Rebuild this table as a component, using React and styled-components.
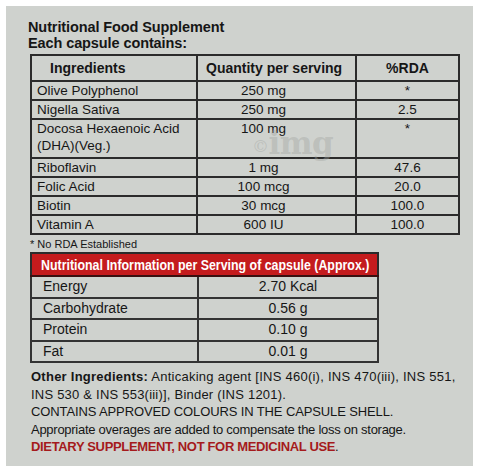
import styled, { createGlobalStyle } from "styled-components";

const GlobalStyle = createGlobalStyle`
  body {
    margin: 0;
    background: #ffffff;
    font-family: "Liberation Sans", Arial, sans-serif;
  }
`;

const Panel = styled.div`
  position: relative;
  margin: 6px 0 0 6px;
  width: 467px;
  height: 460px;
  box-sizing: border-box;
  padding: 13px 0 0 24px;
  background: #cfd2ce;
  color: #161616;
`;

const Title = styled.h1`
  margin: 0 0 3px -2px;
  font-size: 14.5px;
  line-height: 16px;
  font-weight: 700;
  letter-spacing: -0.1px;
`;

const Table = styled.table`
  border-collapse: collapse;
  table-layout: fixed;
  width: ${p => p.width}px;
  border: 2px solid #2b2b2b;
`;

const Head = styled.th`
  height: 24px;
  padding: 0 0 0 ${p => p.pad || 0}px;
  border: 2px solid #2b2b2b;
  font-size: 14px;
  font-weight: 700;
  text-align: ${p => p.align || "left"};
`;

const Cell = styled.td`
  height: ${p => p.tall ? 37 : 17}px;
  padding: 0 ${p => p.right || 0}px 0 ${p => p.left || 0}px;
  border: 2px solid #2b2b2b;
  font-size: 13.5px;
  line-height: 17px;
  text-align: ${p => p.align || "left"};
  vertical-align: top;
`;

const Footnote = styled.div`
  margin: 3px 0 1px;
  font-size: 11px;
  line-height: 13px;
`;

const RedHead = styled.th`
  height: 21px;
  padding: 0 0 0 9px;
  background: #c41b1d;
  border-bottom: 2px solid #3a1010;
  color: #fff;
  font-size: 14px;
  font-weight: 700;
  text-align: left;
  white-space: nowrap;
  overflow: hidden;
`;

const Narrow = styled.span`
  display: inline-block;
  transform: scaleX(${p => p.scale});
  transform-origin: left center;
`;

const InfoCell = styled.td`
  height: 19.5px;
  padding: 0 0 0 ${p => p.left || 0}px;
  border: 2px solid #333;
  font-size: 14px;
  line-height: 19.5px;
  text-align: ${p => p.align || "left"};
`;

const Notes = styled.div`
  margin: 5px 0 0 1px;
  font-size: 13px;
  line-height: 17.5px;
  white-space: nowrap;
`;

const Line = styled.div`
  letter-spacing: ${p => p.spacing}px;
`;

const Strong = styled.b`
  color: ${p => p.red ? "#a51a1c" : "inherit"};
`;

const Watermark = styled.div`
  position: absolute;
  left: 246px;
  top: 122px;
  color: rgba(160, 162, 158, 0.4);
  font-family: "DejaVu Serif", serif;
  font-weight: 700;
  font-size: 31px;
  line-height: 31px;
  letter-spacing: -0.5px;
  pointer-events: none;
  span {
    font-size: 17px;
    font-weight: 400;
    vertical-align: 2px;
  }
`;

const ingredients = [
  ["Olive Polyphenol", "250 mg", "*"],
  ["Nigella Sativa", "250 mg", "2.5"],
  ["Docosa Hexaenoic Acid (DHA)(Veg.)", "100 mg", "*", true],
  ["Riboflavin", "1 mg", "47.6"],
  ["Folic Acid", "100 mcg", "20.0"],
  ["Biotin", "30 mcg", "100.0"],
  ["Vitamin A", "600 IU", "100.0"],
];

const nutrition = [
  ["Energy", "2.70 Kcal"],
  ["Carbohydrate", "0.56 g"],
  ["Protein", "0.10 g"],
  ["Fat", "0.01 g"],
];

export default function App() {
  return (
    <>
      <GlobalStyle />
      <Panel>
        <Title>
          Nutritional Food Supplement
          <br />
          Each capsule contains:
        </Title>

        <Table width={428}>
          <colgroup>
            <col style={{ width: 166 }} />
            <col style={{ width: 159 }} />
            <col style={{ width: 103 }} />
          </colgroup>
          <thead>
            <tr>
              <Head pad={18}>Ingredients</Head>
              <Head pad={8}>Quantity per serving</Head>
              <Head align="center">%RDA</Head>
            </tr>
          </thead>
          <tbody>
            {ingredients.map(([name, qty, rda, tall]) => (
              <tr key={name}>
                <Cell left={5} tall={tall}>{name}</Cell>
                <Cell align="center" right={26} tall={tall}>{qty}</Cell>
                <Cell align="center" tall={tall}>{rda}</Cell>
              </tr>
            ))}
          </tbody>
        </Table>

        <Footnote>* No RDA Established</Footnote>

        <Table width={347}>
          <colgroup>
            <col style={{ width: 167 }} />
            <col style={{ width: 180 }} />
          </colgroup>
          <thead>
            <tr>
              <RedHead colSpan={2}>
                <Narrow scale={0.885}>
                  Nutritional Information per Serving of capsule (Approx.)
                </Narrow>
              </RedHead>
            </tr>
          </thead>
          <tbody>
            {nutrition.map(([name, value]) => (
              <tr key={name}>
                <InfoCell left={11}>{name}</InfoCell>
                <InfoCell align="center">{value}</InfoCell>
              </tr>
            ))}
          </tbody>
        </Table>

        <Notes>
          <Line spacing={0.25}>
            <Strong>Other Ingredients:</Strong> Anticaking agent [INS 460(i), INS 470(iii), INS 551,
          </Line>
          <Line spacing={0.22}>INS 530 &amp; INS 553(iii)], Binder (INS 1201).</Line>
          <Line spacing={-0.12}>CONTAINS APPROVED COLOURS IN THE CAPSULE SHELL.</Line>
          <Line spacing={-0.27}>Appropriate overages are added to compensate the loss on storage.</Line>
          <Line spacing={-0.34}>
            <Strong red>DIETARY SUPPLEMENT, NOT FOR MEDICINAL USE</Strong>.
          </Line>
        </Notes>

        <Watermark>
          <span>©</span>img
        </Watermark>
      </Panel>
    </>
  );
}
